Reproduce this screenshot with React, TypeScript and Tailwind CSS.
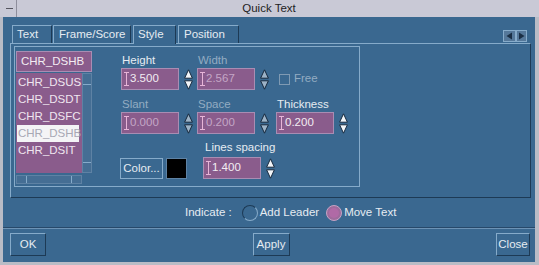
import type { ReactNode } from 'react'

type SpinProps = { dim?: boolean }

const Spin = ({ dim = false }: SpinProps) => {
  const fill = dim ? '#9cb2c6' : '#f2f5f8'
  return (
    <svg width="9" height="21" viewBox="0 0 9 21" className="shrink-0">
      <polygon points="4.5,0.8 8.4,9.2 0.6,9.2" fill={fill} stroke="#17293d" strokeWidth="1" />
      <polygon points="0.6,11.8 8.4,11.8 4.5,20.2" fill={fill} stroke="#17293d" strokeWidth="1" />
    </svg>
  )
}

const IBeam = () => (
  <svg width="5" height="14" viewBox="0 0 5 14" className="shrink-0">
    <path d="M0 0.5H5M2.5 0.5V13.5M0 13.5H5" stroke="#e7b5d8" strokeWidth="1" fill="none" />
  </svg>
)

type InputProps = { value: string; dim?: boolean }

const Input = ({ value, dim = false }: InputProps) => (
  <div
    className={`flex h-[22px] w-[58px] items-center gap-[1px] border border-[#a98db3] bg-[#8a5c8c] pl-[2px] ${
      dim ? 'text-[#c4a6c6]' : 'text-[#f2ecf2]'
    }`}
  >
    <IBeam />
    <span>{value}</span>
  </div>
)

type FieldProps = { label: string; value: string; dim?: boolean; className?: string }

const Field = ({ label, value, dim = false, className = '' }: FieldProps) => (
  <div className={className}>
    <div className={`h-[14px] leading-[14px] pl-[1px] ${dim ? 'text-[#93acc2]' : 'text-[#e6ecf2]'}`}>{label}</div>
    <div className="mt-[1px] flex items-center">
      <Input value={value} dim={dim} />
      <div className="ml-[5px]">
        <Spin dim={dim} />
      </div>
    </div>
  </div>
)

const Tab = ({ children, active = false, className = '' }: { children: ReactNode; active?: boolean; className?: string }) => (
  <div
    className={`flex h-[18px] items-center border-l border-r border-t border-l-[#86abca] border-r-[#1d3a55] border-t-[#86abca] pl-[4px] ${
      active ? 'relative z-10 -mb-[1px] h-[19px] bg-[#3a6890]' : ''
    } ${className}`}
  >
    {children}
  </div>
)

const Button = ({ children, className = '' }: { children: ReactNode; className?: string }) => (
  <div
    className={`flex h-[23px] items-center justify-center border border-b-[#1d3a55] border-l-[#86abca] border-r-[#1d3a55] border-t-[#86abca] text-[#e6ecf2] ${className}`}
  >
    {children}
  </div>
)

const items = ['CHR_DSUS', 'CHR_DSDT', 'CHR_DSFC', 'CHR_DSHB', 'CHR_DSIT']

export default function App() {
  return (
    <div className="flex h-[265px] w-[539px] flex-col overflow-hidden bg-[#c4c6d0] font-['Liberation_Sans',Arial,sans-serif] text-[11.5px]">
      {/* title bar */}
      <div className="flex h-[17px] shrink-0 items-stretch bg-[#c9c9d6] pr-[4px]">
        <div className="ml-[3px] flex w-[14px] items-center justify-center border-r border-[#8e8e9c]">
          <div className="h-[1px] w-[7px] bg-[#55555f]" />
        </div>
        <div className="flex flex-1 items-center justify-center pr-[14px] text-[#1e1e24]">Quick Text</div>
      </div>

      <div className="flex flex-1 flex-col border-l-[3px] border-r-[4px] border-b-[3px] border-[#b9bcc6] bg-[#3a6890] text-[#e6ecf2]">
        {/* tab row */}
        <div className="mt-[8px] flex h-[18px] items-end pl-[9px] pr-[8px]">
          <Tab className="w-[40px]">Text</Tab>
          <Tab className="ml-[1px] w-[78px] pl-[5px]">Frame/Score</Tab>
          <Tab active className="ml-[2px] w-[43px]">
            Style
          </Tab>
          <Tab className="ml-[2px] w-[61px] pl-[5px]">Position</Tab>
          <div className="mb-[1px] ml-auto flex h-[12px]">
            <div className="flex w-[13px] items-center justify-center border border-[#86abca] bg-[#55789a]">
              <svg width="7" height="8" viewBox="0 0 7 8">
                <polygon points="6,0.5 6,7.5 0.5,4" fill="#1b2f45" />
              </svg>
            </div>
            <div className="flex w-[11px] items-center justify-center border border-[#86abca] bg-[#55789a]">
              <svg width="7" height="8" viewBox="0 0 7 8">
                <polygon points="1,0.5 1,7.5 6.5,4" fill="#1b2f45" />
              </svg>
            </div>
          </div>
        </div>

        {/* tab panel */}
        <div className="ml-[7px] h-[155px] w-[521px] border border-b-[#1d3a55] border-l-[#86abca] border-r-[#1d3a55] border-t-[#86abca] pl-[3px] pt-[2px]">
          <div className="flex h-[141px] w-[346px] border border-[#86abca]">
            {/* list column */}
            <div className="ml-[1px] mt-[4px] flex w-[76px] flex-col">
              <div className="flex h-[21px] items-center border border-[#a98db3] bg-[#8a5c8c] pl-[4px] text-[#f2ecf2]">
                CHR_DSHB
              </div>
              <div className="mt-[1px] flex h-[100px]">
                <div className="w-[66px] overflow-hidden bg-[#8a5c8c] pl-[1px] pr-[3px] pt-[1px]">
                  {items.map((it, i) => (
                    <div
                      key={it}
                      className={`flex h-[17px] items-center whitespace-nowrap pl-[1px] ${
                        i === 3 ? 'bg-[#f4f4f6] text-[#a8a8b4]' : 'text-[#efe6ef]'
                      }`}
                    >
                      {it}
                    </div>
                  ))}
                </div>
                <div className="flex w-[10px] flex-col border border-[#5e82a4] bg-[#456e94]">
                  <div className="h-[11px] border-b border-[#86abca]" />
                  <div className="flex-1" />
                  <div className="h-[10px] border-t border-[#86abca]" />
                </div>
              </div>
              <div className="mt-[2px] flex h-[9px] w-[66px] border border-[#5e82a4] bg-[#456e94]">
                <div className="w-[10px] border-r border-[#86abca]" />
                <div className="flex-1" />
                <div className="w-[10px] border-l border-[#86abca]" />
              </div>
            </div>

            {/* fields */}
            <div className="ml-[28px] flex flex-col pt-[6px]">
              <div className="flex">
                <Field label="Height" value="3.500" className="w-[77px] pl-[1px]" />
                <Field label="Width" value="2.567" dim className="w-[79px]" />
                <div className="pt-[15px]">
                  <div className="flex h-[22px] items-center pl-[3px]">
                    <div className="h-[11px] w-[11px] border border-[#7f9ab3]" />
                    <span className="ml-[4px] text-[#93acc2]">Free</span>
                  </div>
                </div>
              </div>
              <div className="mt-[7px] flex">
                <Field label="Slant" value="0.000" dim className="w-[77px] pl-[1px]" />
                <Field label="Space" value="0.200" dim className="w-[79px]" />
                <Field label="Thickness" value="0.200" />
              </div>
              <div className="mt-[6px] flex items-end">
                <div className="flex h-[21px] w-[43px] items-center justify-center border border-[#86abca] text-[#e6ecf2]">
                  Color...
                </div>
                <div className="ml-[3px] h-[21px] w-[21px] border border-[#5e82a4] bg-black" />
                <div className="ml-[16px]">
                  <div className="h-[14px] pl-[2px] leading-[14px] text-[#e6ecf2]">Lines spacing</div>
                  <div className="mt-[3px] flex items-center">
                    <Input value="1.400" />
                    <div className="ml-[5px]">
                      <Spin />
                    </div>
                  </div>
                </div>
              </div>
            </div>
          </div>
        </div>

        {/* indicate row */}
        <div className="flex h-[29px] items-center pl-[182px]">
          <span>Indicate :</span>
          <div className="ml-[10px] h-[16px] w-[16px] rounded-full border border-b-[#86abca] border-l-[#1d3a55] border-r-[#86abca] border-t-[#1d3a55]" />
          <span className="ml-[2px]">Add Leader</span>
          <div className="ml-[7px] flex h-[16px] w-[16px] items-center justify-center rounded-full border border-[#c6a3c4] bg-[#9e6b9c]">
            <div className="h-[10px] w-[10px] rounded-full bg-[#b06aa6]" />
          </div>
          <span className="ml-[2px]">Move Text</span>
        </div>

        {/* separator */}
        <div className="h-[2px] border-b border-t border-b-[#6d93b5] border-t-[#27496a]" />

        {/* buttons */}
        <div className="mt-[4px] flex justify-between pl-[7px] pr-[5px]">
          <Button className="w-[36px]">OK</Button>
          <Button className="w-[37px]">Apply</Button>
          <Button className="w-[34px]">Close</Button>
        </div>
      </div>
    </div>
  )
}
